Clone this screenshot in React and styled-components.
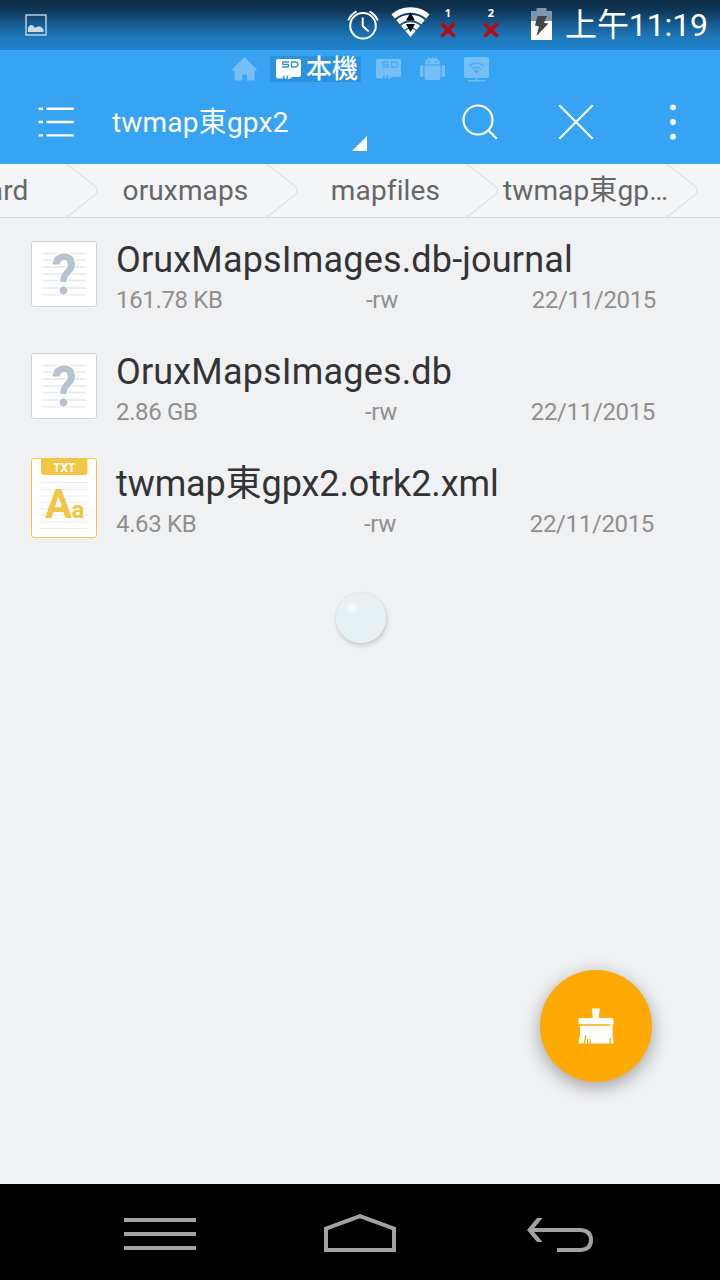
import React from "react";
import styled, { createGlobalStyle } from "styled-components";

const GlobalStyle = createGlobalStyle`
  * {
    box-sizing: border-box;
  }

  body {
    margin: 0;
    font-family: Roboto, "Noto Sans CJK TC", sans-serif;
  }

  svg {
    display: block;
    flex-shrink: 0;
    overflow: visible;
  }
`;

const Screen = styled.div`
  position: relative;
  width: 720px;
  height: 1280px;
  display: flex;
  flex-direction: column;
  background: #f0f1f3;
  overflow: hidden;
`;

const StatusBar = styled.header`
  height: 50px;
  flex-shrink: 0;
  display: flex;
  align-items: center;
  padding: 0 12px 0 25px;
  background: linear-gradient(#0c2c45 0%, #0f3656 20%, #175e95 50%, #1d78bb 75%, #2083cb 100%);
`;

const StatusIcons = styled.div`
  display: flex;
  align-items: center;
  margin-left: auto;
`;

const WifiBox = styled.div`
  margin: 0 0 6px 12px;
`;

const Signal = styled.div`
  width: 18px;
  height: 50px;
  margin-left: ${({ gap }) => gap}px;
  padding-top: 7px;
  display: flex;
  flex-direction: column;
  align-items: center;
  gap: 2px;
  color: #fff;
  font: bold 11px/12px "Noto Sans", sans-serif;
`;

const BatteryBox = styled.div`
  margin: 0 13px 2px 31px;
`;

const Clock = styled.span`
  color: #fff;
  font-size: 32px;
  line-height: 50px;
  white-space: nowrap;
  letter-spacing: -0.1px;
`;

const AppBar = styled.div`
  height: 114px;
  flex-shrink: 0;
  background: #36a3f3;
`;

const WindowTabs = styled.div`
  height: 38px;
  display: flex;
  align-items: center;
  padding-left: 232px;
`;

const WindowTab = styled.div`
  display: flex;
  align-items: center;
  width: 25px;
  height: 26px;
  margin-right: 19px;
  color: #75bff6;
`;

const SelectedTab = styled(WindowTab)`
  width: 91px;
  margin: 0 15px 0 -6px;
  padding-left: 6px;
  background: #2d92dc;
  color: #fff;
`;

const TabLabel = styled.span`
  margin-left: 5px;
  font-size: 26px;
  line-height: 26px;
  font-weight: 500;
  white-space: nowrap;
`;

const Toolbar = styled.div`
  height: 67px;
  display: flex;
  align-items: center;
  padding-left: 38px;
`;

const FolderPicker = styled.div`
  width: 255px;
  height: 67px;
  margin-left: 38px;
  display: flex;
  justify-content: space-between;
`;

const FolderName = styled.span`
  color: #fff;
  font-size: 28px;
  line-height: 69px;
  letter-spacing: 0.2px;
  white-space: nowrap;
`;

const DropMark = styled.svg`
  margin-top: 48px;
`;

const Actions = styled.div`
  display: flex;
  align-items: center;
  margin-left: 95px;
  gap: 60px;
`;

const Crumbs = styled.nav`
  height: 54px;
  flex-shrink: 0;
  display: flex;
  justify-content: flex-end;
  padding-right: 21px;
  background: #f4f5f7;
  border-bottom: 1px solid #d9dadc;
`;

const Crumb = styled.div`
  width: 200px;
  flex-shrink: 0;
  display: flex;
`;

const CrumbLabel = styled.span`
  width: 168px;
  padding-left: 5px;
  display: flex;
  justify-content: center;
  color: #666;
  font-size: 28px;
  line-height: 53px;
  letter-spacing: 0.15px;
  white-space: nowrap;
`;

const FileList = styled.main`
  flex: 1;
`;

const FileRow = styled.div`
  height: 112px;
  display: flex;
  align-items: center;
  padding-left: 31px;
`;

const FileInfo = styled.div`
  margin-left: 19px;
  padding-top: 7px;
`;

const FileName = styled.div`
  color: #333;
  font-size: 36px;
  line-height: 44px;
  letter-spacing: ${({ tracking }) => tracking}px;
  white-space: nowrap;
`;

const FileMeta = styled.div`
  width: ${({ width }) => width}px;
  display: grid;
  grid-template-columns: 1fr 40px 250px;
  color: #8f8f8f;
  font-size: 24px;
  line-height: 36px;
  letter-spacing: -0.35px;
`;

const FileDate = styled.span`
  text-align: right;
`;

const Thumb = styled.div`
  width: 66px;
  height: ${({ tall }) => (tall ? 80 : 66)}px;
  border: 1px solid ${({ tall }) => (tall ? "#f2c544" : "#cdd2dc")};
  border-radius: 3px;
  background: #fff;
`;

const TouchDot = styled.div`
  position: absolute;
  left: 336px;
  top: 593px;
  width: 50px;
  height: 50px;
  border-radius: 50%;
  background: radial-gradient(circle 6px at 16px 15px, #fff 0%, #e7f0f3 100%);
  box-shadow: 0 0 3px rgba(0, 0, 0, 0.1), 1px 3px 5px rgba(0, 0, 0, 0.14);
`;

const CleanButton = styled.button`
  position: absolute;
  left: 540px;
  top: 970px;
  width: 112px;
  height: 112px;
  display: flex;
  align-items: center;
  justify-content: center;
  padding: 0;
  border: 0;
  border-radius: 50%;
  background: #ffaa04;
  box-shadow: 0 5px 18px rgba(0, 0, 0, 0.34);
`;

const NavBar = styled.footer`
  height: 96px;
  flex-shrink: 0;
  display: flex;
  padding: 0 60px;
  background: #000;
`;

const NavKey = styled.div`
  width: 200px;
  display: flex;
  align-items: center;
  justify-content: center;
  color: #a3a3a3;
`;

function PictureIcon() {
  return (
    <svg width="22" height="22" viewBox="0 0 22 22">
      <rect x="1" y="1" width="20" height="20" fill="none" stroke="#c3d6e5" strokeWidth="1.4" />
      <path d="M3 18v-4.500l2.500-2.500 2 .2 2.500 2.500 3-1.200h2.500l3 2.800V18z" fill="#c8dae8" />
    </svg>
  );
}

function AlarmIcon() {
  return (
    <svg width="32" height="30" viewBox="0 0 32 30" fill="none" stroke="#fff" strokeWidth="2">
      <circle cx="16" cy="15.800" r="12.800" />
      <path d="M15.700 7.500V16l6 5.500" />
      <path d="M1.200 10.500Q3.500 4.500 9.500 1.300M30.800 10.500Q28.500 4.500 22.500 1.300" />
    </svg>
  );
}

function WifiIcon() {
  return (
    <svg width="39" height="30" viewBox="0 0 39 30">
      <defs>
        <clipPath id="fan">
          <path d="M19.500 30L-1 5.800V0h41v5.800z" />
        </clipPath>
      </defs>
      <g clipPath="url(#fan)" fill="none" stroke="#fff">
        <circle cx="19.500" cy="29.500" r="26.500" strokeWidth="5.400" />
        <circle cx="19.500" cy="29.500" r="19" strokeWidth="5.400" />
        <circle cx="19.500" cy="29.500" r="11.800" strokeWidth="5" />
        <circle cx="19.500" cy="29.500" r="3.900" strokeWidth="7.800" />
      </g>
      <path d="M19.500 5.500l4.500 8h-9zM19.500 25l4.500-8h-9z" fill="#000" />
    </svg>
  );
}

function CrossIcon() {
  return (
    <svg width="18" height="18" viewBox="0 0 18 18">
      <path d="M2.500 2.500l13 13M15.500 2.500l-13 13" stroke="#b80c0c" strokeWidth="3.800" />
    </svg>
  );
}

function BatteryIcon() {
  return (
    <svg width="21" height="32" viewBox="0 0 21 32">
      <path d="M5.500 0h10v3H21v11H0V3h5.500z" fill="#7b98ae" />
      <path d="M0 13h21v19H0z" fill="#fff" />
      <path d="M6.500 8h9.500l-3 7 4.500.5L5.500 28l2.500-9.500-4-1z" fill="#454545" />
    </svg>
  );
}

function HomeTabIcon() {
  return (
    <svg width="25" height="24" viewBox="0 0 25 24" fill="currentColor">
      <path d="M12.500 0L25 12.500l-1 1.500h-1.500v9.500H15V17.500h-4.800v6H2.500V14H1l-1-1.500z" />
    </svg>
  );
}

function CardIcon({ ink }) {
  return (
    <svg width="25" height="20" viewBox="0 0 25 20">
      <path
        d="M2 0h21q2 0 2 2v14q0 2-2 2h-6.500L13.500 19.800h-2l.8-3.300h-1L10 19.800H8.500v-3H7.500L6.500 19.500H2q-2 0-2-2V2Q0 0 2 0z"
        fill="currentColor"
      />
      <path
        d="M13 3H7.500q-1 0-1 1.200T7.500 5.500h4q1.200 0 1.200 1.200T11.500 8H6M15.500 3h3.500q3 0 3 2.500T19 8h-3.500z"
        fill="none"
        stroke={ink}
        strokeWidth="1.300"
      />
    </svg>
  );
}

function RobotIcon() {
  return (
    <svg width="25" height="24" viewBox="0 0 25 24" fill="currentColor">
      <path d="M4.500 7.500q.5-4 4-5.800L7.500 0l.6-.2L9.300 1.500q3.200-1 6.400 0L16.900-.2l.6.2-1 1.700q3.500 1.800 4 5.800z" />
      <path d="M4.500 8.500h16V21q0 2-2 2h-12q-2 0-2-2z" />
      <rect y="8" width="3.300" height="12" rx="1.500" />
      <rect x="21.700" y="8" width="3.300" height="12" rx="1.500" />
      <circle cx="8.800" cy="4.800" r=".9" fill="#36a3f3" />
      <circle cx="16.200" cy="4.800" r=".9" fill="#36a3f3" />
    </svg>
  );
}

function NetworkIcon() {
  return (
    <svg width="25" height="25" viewBox="0 0 25 25">
      <path d="M2 0h21q2 0 2 2v17q0 2-2 2h-9.500v2H21v1.500H4V23h7.500v-2H2q-2 0-2-2V2Q0 0 2 0z" fill="currentColor" />
      <path d="M5 9.200q7.500-6.500 15 0M8 12.200q4.500-3.800 9 0" fill="none" stroke="#4dacf4" strokeWidth="1.500" />
      <circle cx="12.500" cy="14.500" r="2" fill="#4dacf4" />
    </svg>
  );
}

function ListIcon() {
  return (
    <svg width="36" height="32" viewBox="0 0 36 32" stroke="#fff" strokeWidth="2.400">
      <path d="M.5 2.700H5M8.500 2.700h27.300M.5 16H5M8.500 16h27.300M.5 29.400H5M8.500 29.400h27.300" />
    </svg>
  );
}

function SearchIcon() {
  return (
    <svg width="36" height="36" viewBox="0 0 36 36" fill="none" stroke="#fff" strokeWidth="2.200">
      <circle cx="16" cy="16" r="14.500" />
      <path d="M26.500 26.500l8.300 8.300" />
    </svg>
  );
}

function CloseIcon() {
  return (
    <svg width="36" height="36" viewBox="0 0 36 36" stroke="#fff" strokeWidth="2.200">
      <path d="M1.300 1.300l33.400 33.400M34.700 1.300L1.300 34.700" />
    </svg>
  );
}

function MoreIcon() {
  return (
    <svg width="36" height="36" viewBox="0 0 36 36" fill="#fff">
      <circle cx="19" cy="3.300" r="2.900" />
      <circle cx="19" cy="18" r="2.900" />
      <circle cx="19" cy="32.700" r="2.900" />
    </svg>
  );
}

function Chevron() {
  return (
    <svg width="31" height="53" viewBox="0 0 31 53" fill="none" stroke="#e2e3e5" strokeWidth="1.500">
      <path d="M-1 .8l3 .7 27 21.500q1 1 1 2v3q0 1-1 2L2 51.500l-3 .7" />
    </svg>
  );
}

function UnknownThumb() {
  return (
    <Thumb>
      <svg width="64" height="64" viewBox="0 0 64 64">
        <path
          d="M11 11.500h43M11 18h43M11 25h43M11 32h43M11 38.500h43M11 46h43M11 52.800h43"
          stroke="#e6e7e9"
          strokeWidth="1.300"
        />
        <text
          x="32.200"
          y="52"
          textAnchor="middle"
          fontFamily="Roboto"
          fontWeight="700"
          fontSize="56"
          fill="#b8c1cf"
          stroke="#fff"
          strokeWidth="3"
          paintOrder="stroke"
          textLength="25"
          lengthAdjust="spacingAndGlyphs"
        >
          ?
        </text>
      </svg>
    </Thumb>
  );
}

function TextThumb() {
  return (
    <Thumb tall>
      <svg width="64" height="78" viewBox="0 0 64 78" fontFamily="Roboto" fontWeight="700">
        <path d="M9 0h46.500v13q0 3-3 3H12q-3 0-3-3z" fill="#f2c544" />
        <text
          x="32.200"
          y="12.500"
          textAnchor="middle"
          fontSize="13.500"
          fill="#fff"
          textLength="22"
          lengthAdjust="spacingAndGlyphs"
        >
          TXT
        </text>
        <path
          d="M9 23.500h46.500M9 30.500h46.500M9 37h46.500M9 43.500h46.500M9 49.500h46.500M9 56h46.500M9 63h46.500M9 69.500h46.500"
          stroke="#ececee"
          strokeWidth="1.200"
        />
        <g fill="#f2c544" stroke="#fff" strokeWidth="2" paintOrder="stroke">
          <text x="13" y="59" fontSize="41" textLength="27" lengthAdjust="spacingAndGlyphs">A</text>
          <text x="39.500" y="59" fontSize="24">a</text>
        </g>
      </svg>
    </Thumb>
  );
}

function BrushIcon() {
  return (
    <svg width="36" height="36" viewBox="0 0 36 36" fill="#fff">
      <path d="M13.800.5h8l-1 9.500H33.500q2 0 2 2v4.200H.5V12q0-2 2-2h12.300z" />
      <path d="M2 17.700h29.500l1-1.500h2.200V27l1 8.500H.5L2 27z" />
      <path d="M8 27.500L6 36M9.600 31v5M12.200 31v5M32 30v6" stroke="#ffaa04" strokeWidth="1.200" />
    </svg>
  );
}

const crumbs = ["sdcard", "oruxmaps", "mapfiles", "twmap東gp…"];

const files = [
  { name: "OruxMapsImages.db-journal", size: "161.78 KB", date: "22/11/2015", width: 540, tracking: 0.17 },
  { name: "OruxMapsImages.db", size: "2.86 GB", date: "22/11/2015", width: 539, tracking: 0.17 },
  { name: "twmap東gpx2.otrk2.xml", size: "4.63 KB", date: "22/11/2015", width: 538, tracking: -0.1, text: true },
];

function App() {
  return (
    <Screen>
      <GlobalStyle />
      <StatusBar>
        <PictureIcon />
        <StatusIcons>
          <AlarmIcon />
          <WifiBox>
            <WifiIcon />
          </WifiBox>
          <Signal gap={9}>
            1
            <CrossIcon />
          </Signal>
          <Signal gap={25}>
            2
            <CrossIcon />
          </Signal>
          <BatteryBox>
            <BatteryIcon />
          </BatteryBox>
          <Clock>上午11:19</Clock>
        </StatusIcons>
      </StatusBar>

      <AppBar>
        <WindowTabs>
          <WindowTab>
            <HomeTabIcon />
          </WindowTab>
          <SelectedTab>
            <CardIcon ink="#2d92dc" />
            <TabLabel>本機</TabLabel>
          </SelectedTab>
          <WindowTab>
            <CardIcon ink="#4dacf4" />
          </WindowTab>
          <WindowTab>
            <RobotIcon />
          </WindowTab>
          <WindowTab>
            <NetworkIcon />
          </WindowTab>
        </WindowTabs>
        <Toolbar>
          <ListIcon />
          <FolderPicker>
            <FolderName>twmap東gpx2</FolderName>
            <DropMark width="15" height="15" viewBox="0 0 15 15">
              <path d="M15 0v15H0z" fill="#fff" />
            </DropMark>
          </FolderPicker>
          <Actions>
            <SearchIcon />
            <CloseIcon />
            <MoreIcon />
          </Actions>
        </Toolbar>
      </AppBar>

      <Crumbs>
        {crumbs.map((label) => (
          <Crumb key={label}>
            <CrumbLabel>{label}</CrumbLabel>
            <Chevron />
          </Crumb>
        ))}
      </Crumbs>

      <FileList>
        {files.map((file) => (
          <FileRow key={file.name}>
            {file.text ? <TextThumb /> : <UnknownThumb />}
            <FileInfo>
              <FileName tracking={file.tracking}>{file.name}</FileName>
              <FileMeta width={file.width}>
                <span>{file.size}</span>
                <span>-rw</span>
                <FileDate>{file.date}</FileDate>
              </FileMeta>
            </FileInfo>
          </FileRow>
        ))}
      </FileList>

      <NavBar>
        <NavKey>
          <svg width="72" height="40" viewBox="0 0 72 40" stroke="currentColor" strokeWidth="4">
            <path d="M0 8h72M0 22h72M0 36h72" />
          </svg>
        </NavKey>
        <NavKey>
          <svg width="72" height="40" viewBox="0 0 72 40" fill="none" stroke="currentColor" strokeWidth="4">
            <path d="M2 38V16.700L36 4.200 70 16.700V38z" />
          </svg>
        </NavKey>
        <NavKey>
          <svg width="66" height="40" viewBox="0 0 66 40">
            <path d="M4 18h50q10 1 10 10t-10 10H30" fill="none" stroke="currentColor" strokeWidth="4" />
            <path d="M10 6h5.500L5.500 18l10 12H10L0 18z" fill="currentColor" />
          </svg>
        </NavKey>
      </NavBar>

      <TouchDot />
      <CleanButton>
        <BrushIcon />
      </CleanButton>
    </Screen>
  );
}

export default App;
